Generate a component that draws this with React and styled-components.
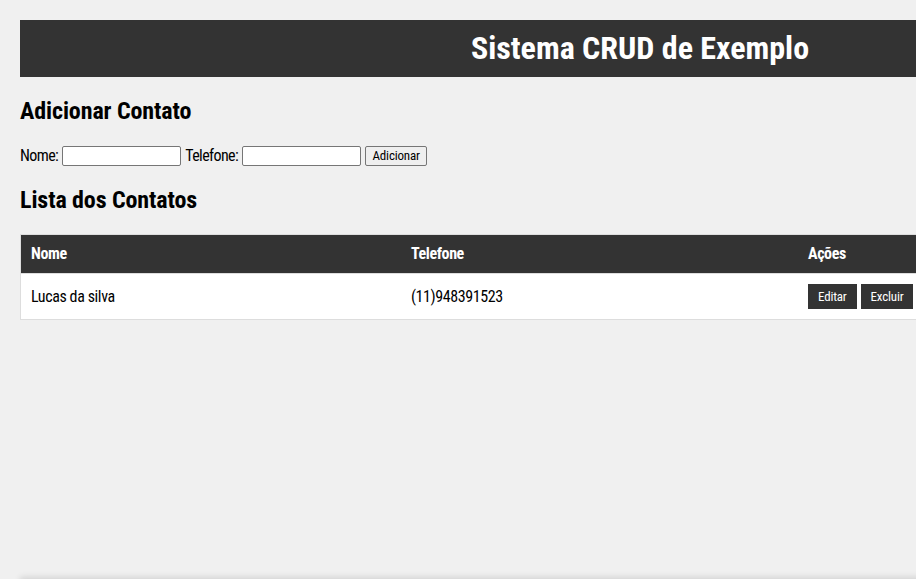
import React from "react";
import styled, { createGlobalStyle } from "styled-components";

const FONT = `"Roboto Condensed", "Liberation Sans", Arial, sans-serif`;

const Global = createGlobalStyle`
  html, body { margin: 0; padding: 0; overflow: hidden; }
  body {
    background: #f0f0f0;
    font-family: ${FONT};
    color: #000;
  }
`;

const Page = styled.div`
  width: 1280px;
  box-sizing: border-box;
  padding: 20px 20px 0;
`;

const Main = styled.main`
  min-height: calc(100vh - 20px);
  display: flow-root;
`;

const Header = styled.header`
  background: #333;
  color: #fff;
  padding: 10px 0;
  text-align: center;
`;

const Title = styled.h1`
  margin: 0;
  font-size: 32px;
  font-weight: bold;
  line-height: 37px;
`;

const SectionTitle = styled.h2`
  font-size: 24px;
  font-weight: bold;
  line-height: 28px;
  letter-spacing: -0.1px;
  margin: 20px 0;
`;

const Form = styled.form`
  display: flex;
  align-items: center;
  gap: 4px;
  height: 21px;
  font-size: 16px;
`;

const Label = styled.label`
  font-size: 16px;
  line-height: 20px;
  letter-spacing: -0.6px;
`;

const Input = styled.input`
  box-sizing: border-box;
  width: 119px;
  height: 20px;
  border: 1px solid #767676;
  border-radius: 2px;
  background: #fff;
  padding: 1px 2px;
  margin: 0;
  font-family: ${FONT};
`;

const SubmitButton = styled.button`
  box-sizing: border-box;
  height: 20px;
  width: 62px;
  padding: 0 5px;
  margin: 0;
  border: 1px solid #767676;
  border-radius: 2px;
  background: #efefef;
  font-family: ${FONT};
  font-size: 13px;
  letter-spacing: -0.2px;
  color: #000;
`;

const Table = styled.table`
  width: 1240px;
  border-collapse: collapse;
  table-layout: fixed;
  background: #fff;
  border: 1px solid #ddd;
  letter-spacing: -0.4px;
`;

const HeadCell = styled.th`
  background: #333;
  color: #fff;
  text-align: left;
  padding: 10px;
  font-size: 16px;
  font-weight: bold;
  line-height: 18px;
  border-bottom: 1px solid #ddd;
  width: ${(p) => (p.$w ? `${p.$w}px` : "auto")};
`;

const Cell = styled.td`
  padding: 10px;
  font-size: 16px;
  border-bottom: 1px solid #ddd;
  vertical-align: middle;
`;

const ActionButton = styled.button`
  background: #333;
  color: #fff;
  border: none;
  padding: 0 10px;
  margin-right: 4px;
  font-family: ${FONT};
  font-size: 13px;
  letter-spacing: -0.2px;
  height: 25px;
  vertical-align: middle;
  cursor: pointer;
`;

const Footer = styled.footer`
  height: 40px;
  box-shadow: 0 -2px 6px rgba(0, 0, 0, 0.12);
`;

export default function App() {
  const contatos = [{ nome: "Lucas da silva", telefone: "(11)948391523" }];
  return (
    <Page>
      <Global />
      <Main>
        <Header>
          <Title>Sistema CRUD de Exemplo</Title>
        </Header>
        <SectionTitle>Adicionar Contato</SectionTitle>
        <Form onSubmit={(e) => e.preventDefault()}>
          <Label>Nome:</Label>
          <Input type="text" />
          <Label>Telefone:</Label>
          <Input type="text" />
          <SubmitButton type="submit">Adicionar</SubmitButton>
        </Form>
        <SectionTitle>Lista dos Contatos</SectionTitle>
        <Table>
          <thead>
            <tr>
              <HeadCell $w={360}>Nome</HeadCell>
              <HeadCell $w={377}>Telefone</HeadCell>
              <HeadCell>Ações</HeadCell>
            </tr>
          </thead>
          <tbody>
            {contatos.map((c) => (
              <tr key={c.telefone}>
                <Cell>{c.nome}</Cell>
                <Cell>{c.telefone}</Cell>
                <Cell>
                  <ActionButton>Editar</ActionButton>
                  <ActionButton>Excluir</ActionButton>
                </Cell>
              </tr>
            ))}
          </tbody>
        </Table>
      </Main>
      <Footer />
    </Page>
  );
}
